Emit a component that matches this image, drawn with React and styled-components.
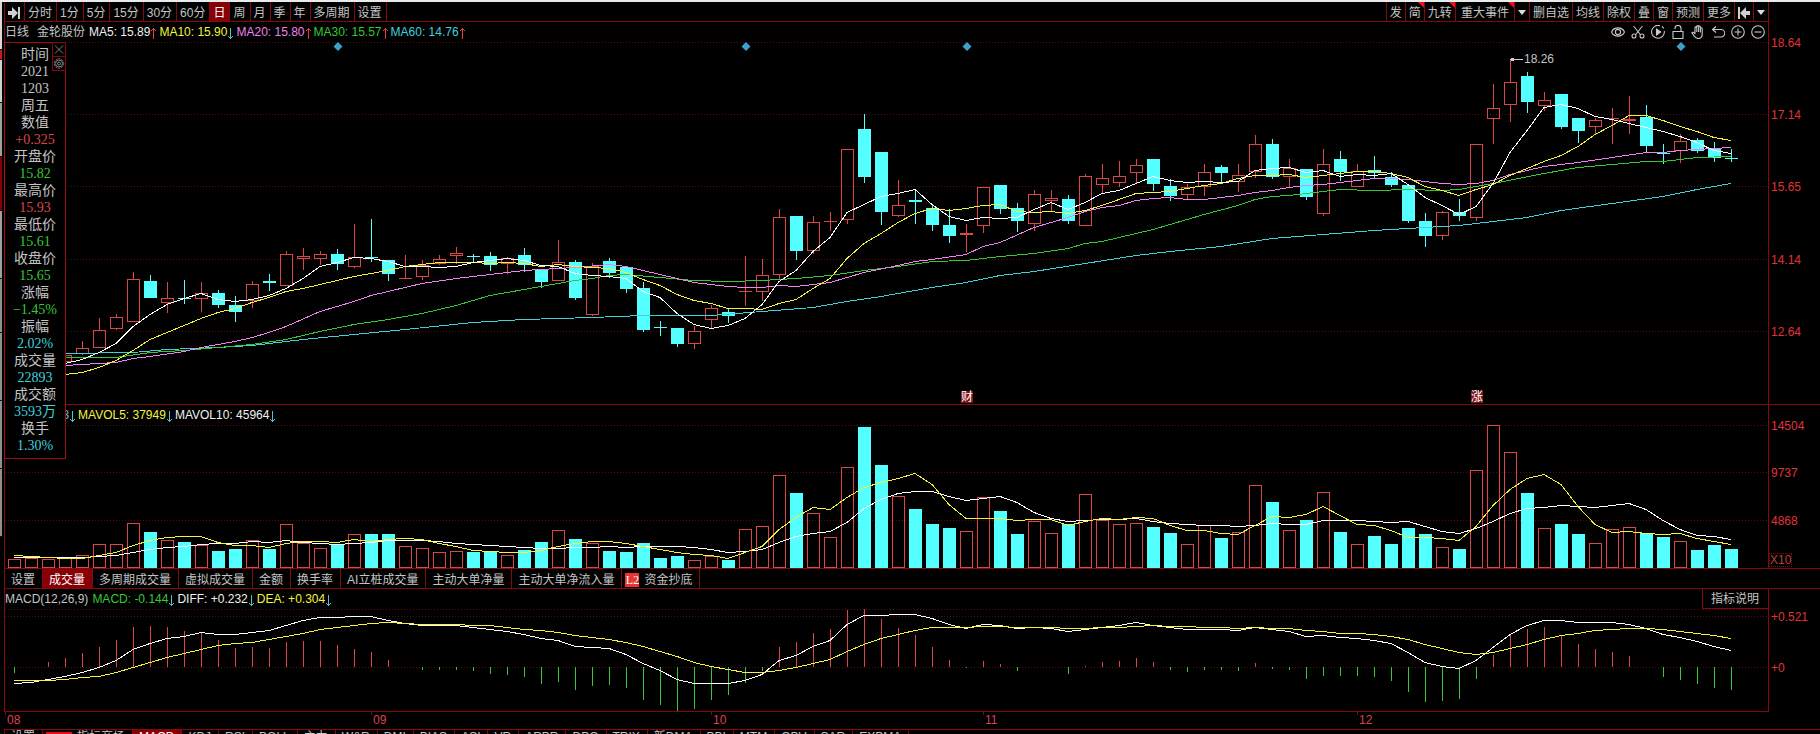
import React, { useLayoutEffect, useRef, useState } from "react";
import styled, { createGlobalStyle } from "styled-components";

const line = "#86080f";
const red = "#dc4646";
const cyan = "#54ffff";
const aqua = "#3fd0dc";
const green = "#34c834";
const yellow = "#f4f43c";
const pink = "#ee82ee";
const grey = "#c4c4c4";
const sans = '"Liberation Sans", "Noto Sans CJK SC", sans-serif';

/* ---------- data ---------- */

const BASE_WIDTH = 1763;
const BASE_PITCH = 17;

// [rising, high, body top, body bottom, low, volume top, macd tip]
const DAYS = [
  [1, 360, 365, 369, 372, 559, 673], [1, 358, 362, 366, 370, 558, 667],
  [1, 360, 365, 367, 370, 559, 662], [1, 352, 355, 361, 364, 558, 658],
  [1, 341, 348, 353, 355, 555, 653], [1, 318, 330, 347, 347, 544, 647],
  [1, 314, 317, 328, 330, 544, 640], [1, 272, 279, 321, 321, 523, 627],
  [0, 275, 281, 298, 298, 532, 626], [1, 282, 298, 302, 313, 540, 627],
  [0, 280, 298, 299, 304, 542, 631], [1, 282, 293, 298, 312, 545, 633],
  [0, 290, 293, 305, 308, 551, 640], [0, 296, 305, 312, 322, 549, 648],
  [1, 281, 284, 300, 308, 540, 647], [0, 274, 281, 283, 291, 549, 648],
  [1, 251, 254, 285, 286, 524, 642], [1, 248, 256, 258, 270, 543, 641],
  [1, 251, 254, 258, 265, 548, 641], [0, 249, 254, 264, 270, 544, 645],
  [1, 224, 257, 266, 268, 534, 649], [0, 219, 257, 258, 262, 534, 652],
  [0, 260, 260, 274, 281, 534, 660], [1, 255, 278, 278, 279, 546, 667],
  [1, 260, 265, 276, 280, 548, 670], [1, 255, 259, 263, 265, 552, 670],
  [1, 247, 253, 255, 264, 551, 670], [0, 254, 256, 257, 262, 552, 671],
  [0, 252, 256, 265, 271, 551, 674], [1, 257, 258, 263, 274, 555, 675],
  [0, 248, 255, 265, 272, 550, 677], [0, 269, 269, 282, 288, 542, 684],
  [1, 240, 262, 280, 281, 530, 682], [0, 260, 262, 298, 300, 539, 690],
  [1, 263, 266, 314, 316, 543, 686], [0, 258, 261, 273, 278, 551, 685],
  [0, 267, 267, 289, 293, 552, 688], [0, 282, 288, 330, 332, 543, 700],
  [0, 321, 327, 328, 336, 558, 705], [0, 328, 328, 344, 347, 556, 711],
  [1, 326, 331, 343, 349, 560, 709], [1, 305, 308, 319, 328, 556, 700],
  [0, 308, 312, 316, 323, 560, 695], [1, 256, 291, 291, 306, 529, 683],
  [1, 259, 275, 291, 301, 526, 671], [1, 209, 217, 274, 280, 475, 647],
  [0, 216, 216, 251, 260, 493, 642], [1, 216, 222, 250, 254, 513, 633],
  [1, 212, 221, 221, 231, 537, 629], [1, 149, 149, 219, 224, 467, 610],
  [0, 114, 129, 177, 183, 427, 609], [0, 152, 152, 212, 225, 465, 619],
  [1, 180, 205, 215, 217, 496, 628], [0, 190, 200, 202, 224, 509, 635],
  [0, 204, 208, 225, 231, 524, 647], [0, 209, 225, 236, 243, 528, 660],
  [1, 224, 233, 234, 252, 531, 668], [1, 187, 187, 225, 233, 497, 661],
  [0, 185, 185, 209, 214, 511, 664], [0, 203, 208, 221, 232, 534, 671],
  [1, 190, 194, 223, 231, 521, 667], [1, 190, 198, 200, 211, 533, 667],
  [0, 195, 199, 221, 224, 524, 674], [1, 174, 176, 225, 226, 494, 666],
  [1, 164, 178, 184, 193, 520, 662], [1, 161, 176, 182, 187, 524, 661],
  [1, 159, 165, 172, 183, 523, 658], [0, 159, 159, 184, 191, 527, 662],
  [0, 179, 186, 196, 201, 533, 670], [1, 184, 187, 194, 199, 544, 672],
  [1, 164, 172, 186, 196, 525, 670], [0, 165, 167, 173, 183, 538, 670],
  [1, 164, 175, 181, 192, 532, 671], [1, 135, 144, 171, 178, 485, 663],
  [0, 139, 144, 177, 179, 502, 669], [1, 159, 168, 176, 187, 530, 670],
  [0, 169, 169, 197, 200, 520, 679], [1, 149, 164, 213, 216, 492, 676],
  [0, 151, 159, 172, 181, 532, 676], [1, 164, 171, 186, 187, 544, 676],
  [0, 156, 170, 173, 178, 536, 677], [0, 172, 177, 185, 187, 544, 681],
  [0, 185, 185, 221, 223, 528, 692], [0, 213, 221, 236, 247, 534, 702],
  [1, 211, 212, 235, 240, 547, 701], [0, 199, 212, 216, 221, 549, 699],
  [1, 144, 144, 217, 221, 470, 679], [1, 84, 108, 118, 144, 425, 655],
  [1, 60, 82, 104, 122, 452, 635], [0, 72, 76, 102, 113, 493, 629],
  [1, 92, 100, 105, 111, 528, 627], [0, 94, 94, 127, 129, 524, 636],
  [0, 118, 118, 131, 143, 534, 644], [1, 118, 120, 126, 135, 543, 649],
  [1, 108, 118, 118, 144, 529, 652], [1, 96, 119, 120, 134, 527, 656],
  [0, 105, 117, 146, 152, 533, 667], [0, 144, 153, 154, 164, 537, 677],
  [1, 134, 141, 150, 163, 541, 680], [0, 138, 140, 151, 153, 550, 684],
  [0, 142, 148, 158, 162, 545, 688], [0, 149, 158, 159, 162, 549, 690],
].map(([up, high, top, bottom, low, volume, macd]) => ({ up, high, top, bottom, low, volume, macd }));

const average = (earlier, values, span) => {
  const all = [...earlier, ...values];
  return values.map((_, i) => {
    const end = i + earlier.length + 1;
    const part = all.slice(Math.max(0, end - span), end);
    return [i, part.reduce((a, b) => a + b, 0) / part.length];
  });
};

const closes = DAYS.map((d) => (d.up ? d.top : d.bottom));
const volumes = DAYS.map((d) => d.volume);
const MA5 = average([379, 408, 371, 370], closes, 5);
const MA10 = average([390, 385, 378, 368, 380, 387, 379, 408, 371], closes, 10);
const VOL5 = average([553, 553, 553, 556], volumes, 5);
const VOL10 = average([556, 556, 556, 556, 556, 556, 556, 557, 558], volumes, 10);

const MA20 = [[3, 365], [5, 363], [6, 362], [7, 358], [8, 356], [10, 351], [11, 347], [13, 341], [14, 337], [15, 332], [16, 326], [18, 311], [19, 306], [20, 301], [21, 295], [22, 291], [24, 283], [26, 278], [28, 274], [30, 270], [33, 267], [35, 264], [36, 266], [38, 274], [40, 282], [42, 286], [43, 287], [44, 287], [45, 285], [46, 286], [47, 284], [48, 282], [50, 272], [52, 265], [53, 261], [54, 259], [56, 254], [57, 246], [58, 242], [60, 227], [61, 222], [62, 217], [63, 211], [64, 207], [65, 205], [66, 200], [67, 198], [68, 197], [69, 199], [70, 199], [71, 197], [72, 195], [73, 192], [74, 190], [75, 187], [76, 185], [77, 184], [78, 182], [79, 180], [80, 178], [81, 178], [82, 179], [83, 181], [84, 183], [85, 184], [86, 183], [87, 180], [88, 174], [90, 166], [92, 162], [94, 157], [96, 152], [97, 152], [98, 150], [99, 149], [100, 148], [101, 147]];
const MA30 = [[3, 357], [6, 357], [8, 352], [10, 350], [12, 347], [14, 344], [16, 339], [18, 331], [20, 324], [22, 319], [24, 313], [26, 305], [28, 295], [29, 292], [31, 286], [33, 280], [34, 278], [35, 275], [36, 274], [38, 277], [40, 280], [42, 281], [44, 280], [46, 278], [48, 275], [50, 270], [52, 266], [54, 261], [56, 260], [58, 256], [60, 253], [62, 248], [63, 243], [64, 241], [66, 233], [67, 229], [68, 224], [70, 214], [72, 205], [73, 199], [74, 196], [75, 195], [77, 191], [78, 189], [80, 190], [82, 189], [84, 190], [85, 189], [87, 183], [90, 173], [92, 167], [96, 161], [97, 161], [99, 157], [101, 156]];
const MA60 = [[3, 353], [7, 352], [9, 349], [12, 347], [14, 345], [17, 339], [20, 334], [23, 329], [27, 322], [30, 319], [34, 317], [37, 315], [41, 315], [44, 311], [47, 307], [49, 301], [51, 296], [53, 290], [54, 287], [56, 282], [58, 275], [60, 271], [63, 263], [66, 255], [68, 251], [71, 246], [74, 238], [77, 234], [80, 230], [82, 228], [85, 225], [87, 221], [89, 217], [91, 210], [94, 203], [97, 196], [99, 189], [101, 183]];
const indexed = (values) => values.map((v, i) => [i, v]);
const DIFF = indexed([683, 682, 679, 676, 672, 667, 660, 649, 643, 638, 636, 632, 634, 634, 632, 630, 625, 620, 617, 617, 616, 616, 620, 623, 625, 625, 625, 627, 629, 631, 634, 638, 640, 646, 647, 648, 654, 663, 670, 679, 683, 683, 683, 680, 674, 660, 655, 646, 640, 624, 615, 615, 614, 614, 618, 624, 628, 624, 625, 628, 627, 628, 631, 629, 627, 625, 622, 625, 627, 629, 629, 629, 630, 627, 629, 631, 636, 635, 637, 638, 640, 643, 652, 662, 666, 668, 660, 647, 634, 625, 620, 620, 622, 622, 622, 624, 628, 634, 637, 641, 646, 650]);
const DEA = indexed([680, 680, 680, 679, 677, 676, 672, 667, 662, 657, 653, 649, 645, 643, 642, 639, 636, 633, 629, 627, 625, 623, 622, 623, 624, 624, 624, 625, 625, 627, 629, 630, 632, 635, 637, 639, 642, 646, 651, 656, 662, 666, 669, 672, 672, 670, 667, 663, 659, 651, 644, 638, 634, 630, 627, 627, 627, 626, 626, 627, 627, 627, 628, 628, 627, 627, 626, 625, 626, 626, 627, 627, 628, 627, 628, 628, 630, 631, 633, 633, 634, 636, 639, 644, 648, 652, 654, 652, 648, 644, 639, 635, 633, 630, 629, 628, 628, 629, 631, 633, 635, 638]);

const PERIODS = ["分时", "1分", "5分", "15分", "30分", "60分", "日", "周", "月", "季", "年", "多周期", "设置"];
const TOOLS = [
  { text: "发" }, { text: "简", hot: true }, { text: "九转", hot: true },
  { text: "重大事件", hot: true, wide: true }, { drop: true, name: "事件菜单" }, { text: "删自选" },
  { text: "均线" }, { text: "除权" }, { text: "叠" }, { text: "窗" }, { text: "预测" }, { text: "更多" },
];
const INDICATORS = ["设置", "成交量", "多周期成交量", "虚拟成交量", "金额", "换手率", "AI立桩成交量", "主动大单净量", "主动大单净流入量"];
const STUDIES = ["KDJ", "RSI", "BOLL", "主力", "W&R", "DMI", "BIAS", "ASI", "VR", "ARBR", "DPO", "TRIX", "新DMA", "BBI", "MTM", "OBV", "SAR", "EXPMA"];
const QUOTE = [
  ["时间"], ["2021", grey], ["1203", grey], ["周五"], ["数值"], ["+0.325", red],
  ["开盘价"], ["15.82", green], ["最高价"], ["15.93", red], ["最低价"], ["15.61", green],
  ["收盘价"], ["15.65", green], ["涨幅"], ["−1.45%", green], ["振幅"], ["2.02%", aqua],
  ["成交量"], ["22893", aqua], ["成交额"], ["3593万", aqua], ["换手"], ["1.30%", aqua],
];
const RAIL = [
  ["#d8d8d8", 48], ["#d01818", 10], ["#d0d0d0", 43], ["#a0a0a0", 54], ["#8a0000", 54],
  ["#a0a0a0", 68], ["#909090", 54], ["#909090", 68], ["#909090", 68], ["#909090", 68],
];

/* ---------- styles ---------- */

const GlobalStyle = createGlobalStyle`
  * { box-sizing: border-box; }
  body { margin: 0; background: #000; color: ${grey}; font: 12px/16px ${sans}; }
  button { margin: 0; padding: 0; border: 0; background: none; color: inherit; font: inherit; cursor: pointer; }
  svg { display: block; }
`;

const Screen = styled.div`
  height: 100vh;
  overflow: hidden;
  border-top: 2px solid #e8ebee;
  display: flex;
`;
const Rail = styled.div`
  width: 2px;
  margin-right: 2px;
  flex: none;
`;
const RailPart = styled.div`
  height: ${(p) => p.$size}px;
  background: ${(p) => p.$color};
  border-bottom: 1px solid #111;
`;
const Terminal = styled.main`
  flex: 1;
  min-width: 0;
  position: relative;
`;
const Toolbar = styled.nav`
  height: 20px;
  margin-right: 51px;
  border: solid ${line};
  border-width: 0 1px 1px;
  display: flex;
  justify-content: space-between;
`;
const Group = styled.div`
  display: flex;
`;
const ToolButton = styled.button`
  position: relative;
  height: 19px;
  flex: none;
  display: flex;
  align-items: center;
  justify-content: center;
  white-space: nowrap;
  padding: 2px ${(p) => (p.$wide ? 5 : 3)}px 0 !important;
  border: solid ${line} !important;
  border-width: ${(p) => (p.$side === "left" ? "0 0 0 1px" : "0 1px 0 0")} !important;
  background: ${(p) => (p.$active ? "#860006" : "none")};
  color: ${(p) => (p.$active ? "#fff" : grey)};
`;
const PeriodButton = styled(ToolButton)`
  padding: 2px 4px 0 3px !important;
`;
const Corner = styled.span`
  position: absolute;
  top: 0;
  right: 0;
  border: 3px solid;
  border-color: #f01020 #f01020 transparent transparent;
`;

const Pane = styled.section`
  display: flex;
  height: ${(p) => p.$size}px;
  border-bottom: ${(p) => (p.$open ? 0 : 1)}px solid ${line};
`;
const Plot = styled.div`
  position: relative;
  flex: 1;
  min-width: 0;
  overflow: hidden;
  border: solid ${line};
  border-width: 0 0 ${(p) => (p.$open ? 1 : 0)}px 1px;
`;
const Scale = styled.div`
  position: relative;
  flex: none;
  width: 52px;
  height: 100%;
  border-left: 1px solid ${line};
  color: #e23238;
`;
const ScaleMark = styled.span`
  position: absolute;
  left: ${(p) => (p.$boxed ? 0 : 2)}px;
  height: ${(p) => (p.$boxed ? 14 : 16)}px;
  line-height: ${(p) => (p.$boxed ? 13 : 16)}px;
  border: ${(p) => (p.$boxed ? `1px dotted ${line}` : 0)};
  color: ${(p) => (p.$boxed ? "#b84040" : "inherit")};
`;
const Legend = styled.div`
  position: absolute;
  top: 0;
  left: 0;
  right: 0;
  height: 20px;
  display: flex;
  align-items: center;
  gap: 2px;
  white-space: nowrap;
`;
const LegendName = styled.span`
  margin-right: ${(p) => (p.$loose ? 6 : 2)}px;
`;
const LegendItem = styled.span`
  display: flex;
  align-items: center;
  gap: 1px;
  color: ${(p) => p.$color};
`;
const IconRow = styled.div`
  display: flex;
  gap: 6px;
  margin: 0 3px 0 auto;
`;
const IconButton = styled.button`
  width: 14px;
  height: 14px;
`;
const HelpButton = styled.button`
  height: 20px;
  margin-left: auto !important;
  padding: 0 9px 0 8px !important;
  border: solid ${line} !important;
  border-width: 0 0 1px 1px !important;
`;

const Tabs = styled.nav`
  height: 20px;
  border: solid ${line};
  border-width: ${(p) => (p.$lower ? "1px 0 0 1px" : "0 0 1px 1px")};
  display: flex;
`;
const Tab = styled.button`
  height: ${(p) => (p.$low ? 14 : 19)}px;
  flex: none;
  display: flex;
  align-items: center;
  gap: 5px;
  white-space: nowrap;
  padding: ${(p) => (p.$low ? 0 : 2)}px 7px 0 6px !important;
  border-right: 1px solid ${line} !important;
  background: ${(p) => (p.$active ? "#860006" : "none")};
  color: ${(p) => (p.$active ? "#fff" : grey)};
`;
const BadgeTab = styled(Tab)`
  padding-left: 3px !important;
`;
const Badge = styled.span`
  width: 14px;
  height: 14px;
  background: #ea3434;
  color: #fff;
  font: 12px/14px "Liberation Serif", serif;
  text-align: center;
`;
const HotMark = styled.span`
  align-self: flex-start;
  width: 26px;
  height: 12px;
  margin-top: 2px;
  background: #e80c10;
`;
const Dates = styled.div`
  height: 17px;
  margin: 0 52px 0 1px;
  overflow: hidden;
`;

const Quote = styled.aside`
  position: absolute;
  top: 40px;
  left: 0;
  width: 62px;
  padding: 3px 0 4px;
  background: #000;
  border: 1px solid #a01016;
  font-size: 14px;
  line-height: 17px;
  text-align: center;
`;
const QuoteRow = styled.div`
  height: 17px;
  color: ${(p) => p.$color || grey};
  font-family: ${(p) => (p.$color ? '"Liberation Serif", "Noto Sans CJK SC", serif' : sans)};
`;
const QuoteTools = styled.div`
  position: absolute;
  top: -1px;
  right: -1px;
`;
const QuoteButton = styled.button`
  display: block;
  width: 14px;
  height: 15px;
  margin-bottom: -1px !important;
  border: 1px solid ${line} !important;
  color: #808080;
`;

/* ---------- drawings ---------- */

const Trend = ({ up }) => (
  <svg width="6" height="13" viewBox="0 0 6 13" fill="none" stroke={up ? "#e04040" : "#4cc4d8"} shapeRendering="crispEdges">
    {up ? <path d="M2.5 13V2M0 4.5h1M1 3.5h3M4 4.5h1" /> : <path d="M2.5 2v11M0 10.5h1M1 11.5h3M4 10.5h1" />}
  </svg>
);

const Caret = () => (
  <svg width="8" height="5" viewBox="0 0 8 5"><path d="M0 0h8L4 5z" fill="#dcdcdc" /></svg>
);

const Jump = ({ back }) => (
  <svg width="12" height="12" viewBox="0 0 12 12" fill="#d0d0d0">
    <g transform={back ? "matrix(-1 0 0 1 12 0)" : undefined}>
      <path d="M0 4h4V0l6 6-6 6V8H0zM10 0h2v12h-2z" />
    </g>
  </svg>
);

const ICONS = [
  ["显示", <g key="i"><path d="M.5 7C3 1.500 11 1.500 13.500 7C11 12.500 3 12.500 .5 7z" /><circle cx="7" cy="7" r="2.600" /></g>],
  ["剪切", <g key="i"><path d="M2.500 1l6.800 8.500M11.500 1L4.700 9.500" /><circle cx="3" cy="11" r="2" /><circle cx="11" cy="11" r="2" /></g>],
  ["播放", <g key="i"><path d="M9 .8A6.400 6.400 0 1 0 13.300 6M11 1.500l1.800 1.800" /><path d="M5.500 4v6l4.200-3z" fill="#d0d0d0" /></g>],
  ["解锁", <path key="i" d="M2 6.500h10v7H2zM4 4V3.500a3 3 0 0 1 6 0V6.500" />],
  ["拖动", <path key="i" d="M4 9V2.800a.9.9 0 0 1 1.800 0V7V1.500a.9.9 0 0 1 1.800 0V7V2a.9.9 0 0 1 1.800 0V7.500V3.600a.9.9 0 0 1 1.800 0V9c0 3-1.500 4.500-4 4.500S4 12.500 2.900 10.800L.9 7.700c.8-1 1.800-.4 3.100 1.300" />],
  ["撤销", <path key="i" d="M5 1.500L1.500 4.500L5 7.500M1.500 4.500H10a3.500 3.500 0 0 1 0 7.500H3" />],
  ["放大", <g key="i"><circle cx="7" cy="7" r="6.300" /><path d="M3.500 7h7M7 3.500v7" /></g>],
  ["缩小", <g key="i"><circle cx="7" cy="7" r="6.300" /><path d="M3.500 7h7" /></g>],
];

function useScaleX() {
  const ref = useRef(null);
  const [width, setWidth] = useState(BASE_WIDTH);
  useLayoutEffect(() => {
    const measure = () => setWidth(ref.current.clientWidth || BASE_WIDTH);
    measure();
    const observer = new ResizeObserver(measure);
    observer.observe(ref.current);
    return () => observer.disconnect();
  }, []);
  const pitch = (width / BASE_WIDTH) * BASE_PITCH;
  const body = Math.max(3, Math.round(pitch) - 4);
  return { ref, width, body, x: (i) => Math.round(9 + i * pitch) };
}

const Canvas = ({ width, top, size, children }) => (
  <svg width={width} height={size} viewBox={`0 ${top} ${width} ${size}`} shapeRendering="crispEdges">{children}</svg>
);

const Guides = ({ width, levels }) =>
  levels.map((y) => <path key={y} d={`M0 ${y}.5H${width - 1}`} stroke="#580a0e" strokeDasharray="1 2" />);

const Curve = ({ points, x, color }) => (
  <polyline points={points.map(([i, y]) => `${x(i)},${Math.round(y) + 0.5}`).join(" ")} fill="none" stroke={color} />
);

// A day that closes where it opened has no body: it is drawn as a single bar.
const Box = ({ left, top, width, bottom, up }) =>
  up && bottom > top ? (
    <rect x={left + 0.5} y={top + 0.5} width={width - 1} height={bottom - top} fill="none" stroke={red} />
  ) : (
    <rect x={left} y={top} width={width} height={Math.max(1, bottom - top)} fill={up ? red : cyan} />
  );

function PricePlot() {
  const { ref, width, body, x } = useScaleX();
  const half = (body - 1) / 2;
  return (
    <Plot ref={ref}>
      <Canvas width={width} top={22} size={382}>
        <Guides width={width} levels={[42, 114, 186, 259, 331]} />
        {DAYS.map((d, i) => (
          <g key={i}>
            <rect x={x(i)} y={d.high} width="1" height={Math.max(0, d.top - d.high)} fill={d.up ? red : cyan} />
            <rect x={x(i)} y={d.bottom} width="1" height={Math.max(0, d.low - d.bottom)} fill={d.up ? red : cyan} />
            <Box left={x(i) - half} width={body} top={d.top} bottom={d.bottom} up={d.up} />
          </g>
        ))}
        <Curve points={MA60} x={x} color={aqua} />
        <Curve points={MA30} x={x} color={green} />
        <Curve points={MA20} x={x} color={pink} />
        <Curve points={MA10} x={x} color={yellow} />
        <Curve points={MA5} x={x} color="#fff" />
        {[19, 43, 56, 98].map((i) => (
          <path key={i} d={`M${x(i) + 1} 42l4.500 4.500-4.500 4.500-4.500-4.500z`} fill="#3aa2c8" shapeRendering="auto" />
        ))}
        <path d={`M${x(88)} 59.500h13M${x(88) + 1} 58.500h3M${x(88) + 1} 60.500h3`} stroke="#d0d0d0" />
        <text x={x(88) + 14} y="63" fill={grey} fontSize="12">18.26</text>
        {[["财", 56], ["涨", 86]].map(([mark, i]) => (
          <g key={mark}>
            <rect x={x(i) - 5} y="391" width="12" height="12" fill="#7c1216" />
            <text x={x(i) - 5} y="401" fill="#fff" fontSize="12">{mark}</text>
          </g>
        ))}
      </Canvas>
      <Legend>
        <LegendName $loose>日线</LegendName>
        <LegendName>金轮股份</LegendName>
        <LegendItem $color="#f0f0f0">MA5: 15.89<Trend up /></LegendItem>
        <LegendItem $color={yellow}>MA10: 15.90<Trend /></LegendItem>
        <LegendItem $color={pink}>MA20: 15.80<Trend up /></LegendItem>
        <LegendItem $color={green}>MA30: 15.57<Trend up /></LegendItem>
        <LegendItem $color={aqua}>MA60: 14.76<Trend up /></LegendItem>
        <IconRow>
          {ICONS.map(([name, art]) => (
            <IconButton key={name} type="button" aria-label={name}>
              <svg width="14" height="14" viewBox="0 0 14 14" fill="none" stroke="#c8c8c8" strokeWidth="1.1">{art}</svg>
            </IconButton>
          ))}
        </IconRow>
      </Legend>
    </Plot>
  );
}

function VolumePlot() {
  const { ref, width, body, x } = useScaleX();
  const half = (body - 1) / 2;
  return (
    <Plot ref={ref}>
      <Canvas width={width} top={405} size={163}>
        <Guides width={width} levels={[425, 472, 520]} />
        {DAYS.map((d, i) => (
          <Box key={i} left={x(i) - half} width={body} top={d.volume} bottom={d.up ? 567 : 568} up={d.up} />
        ))}
        <Curve points={VOL10} x={x} color="#fff" />
        <Curve points={VOL5} x={x} color={yellow} />
      </Canvas>
      <Legend>
        <LegendItem $color="#7cb8c4">VOL: 22893<Trend /></LegendItem>
        <LegendItem $color={yellow}>MAVOL5: 37949<Trend /></LegendItem>
        <LegendItem $color="#f0f0f0">MAVOL10: 45964<Trend /></LegendItem>
      </Legend>
    </Plot>
  );
}

function MacdPlot() {
  const { ref, width, x } = useScaleX();
  return (
    <Plot ref={ref} $open>
      <Canvas width={width} top={589} size={122}>
        <Guides width={width} levels={[609, 616, 667]} />
        {DAYS.map((d, i) => (
          <rect
            key={i}
            x={x(i)}
            y={Math.min(667, d.macd)}
            width="1"
            height={Math.abs(d.macd - 667)}
            fill={d.macd < 667 ? red : green}
          />
        ))}
        <Curve points={DIFF} x={x} color="#fff" />
        <Curve points={DEA} x={x} color={yellow} />
      </Canvas>
      <Legend>
        <LegendName>MACD(12,26,9)</LegendName>
        <LegendItem $color={green}>MACD: -0.144<Trend /></LegendItem>
        <LegendItem $color="#f0f0f0">DIFF: +0.232<Trend /></LegendItem>
        <LegendItem $color={yellow}>DEA: +0.304<Trend /></LegendItem>
        <HelpButton type="button">指标说明</HelpButton>
      </Legend>
    </Plot>
  );
}

function DateAxis() {
  const { ref, width, x } = useScaleX();
  const months = [["08", 0], ["09", x(21)], ["10", x(41)], ["11", x(57)], ["12", x(79)]];
  return (
    <Dates ref={ref}>
      <Canvas width={width} top={0} size={17}>
        {months.map(([label, left]) => (
          <g key={label}>
            <rect x={left} y="0" width="1" height="3" fill={line} />
            <text x={left + 2} y="12" fill="#dc4050" fontSize="12">{label}</text>
          </g>
        ))}
      </Canvas>
    </Dates>
  );
}

const Axis = ({ marks }) => (
  <Scale>
    {marks.map(([text, top, boxed]) => (
      <ScaleMark key={text} $boxed={boxed} style={{ top }}>{text}</ScaleMark>
    ))}
  </Scale>
);

export default function App() {
  return (
    <>
      <GlobalStyle />
      <Screen>
        <Rail>
          {RAIL.map(([color, size], i) => <RailPart key={i} $color={color} $size={size} />)}
        </Rail>
        <Terminal>
          <Toolbar>
            <Group>
              <PeriodButton type="button" aria-label="前进"><Jump /></PeriodButton>
              {PERIODS.map((text) => (
                <PeriodButton key={text} type="button" $active={text === "日"}>{text}</PeriodButton>
              ))}
            </Group>
            <Group>
              {TOOLS.map(({ text, hot, wide, drop, name }) => (
                <ToolButton key={text || name} type="button" $side="left" $wide={wide} aria-label={name}>
                  {drop ? <Caret /> : text}
                  {hot && <Corner />}
                </ToolButton>
              ))}
              <ToolButton type="button" $side="left" aria-label="后退"><Jump back /></ToolButton>
              <ToolButton type="button" $side="left" aria-label="工具菜单"><Caret /></ToolButton>
            </Group>
          </Toolbar>

          <Pane $size={383}>
            <PricePlot />
            <Axis marks={[["18.64", 13], ["17.14", 85], ["15.65", 157], ["14.14", 230], ["12.64", 302]]} />
          </Pane>
          <Pane $size={164}>
            <VolumePlot />
            <Axis marks={[["14504", 13], ["9737", 60], ["4868", 108], ["X10", 148, true]]} />
          </Pane>
          <Tabs>
            {INDICATORS.map((text) => (
              <Tab key={text} type="button" $active={text === "成交量"}>{text}</Tab>
            ))}
            <BadgeTab type="button"><Badge>L2</Badge>资金抄底</BadgeTab>
          </Tabs>
          <Pane $size={123} $open>
            <MacdPlot />
            <Axis marks={[["+0.521", 20], ["+0", 71]]} />
          </Pane>
          <DateAxis />
          <Tabs $lower>
            <Tab type="button" $low>设置</Tab>
            <BadgeTab type="button" $low><HotMark />指标商场</BadgeTab>
            <Tab type="button" $low $active>MACD</Tab>
            {STUDIES.map((text) => <Tab key={text} type="button" $low>{text}</Tab>)}
          </Tabs>

          <Quote>
            {QUOTE.map(([text, color]) => <QuoteRow key={text} $color={color}>{text}</QuoteRow>)}
            <QuoteTools>
              <QuoteButton type="button" aria-label="关闭">
                <svg width="12" height="13" viewBox="0 0 12 13" stroke="currentColor"><path d="M2 2.500l8 8M10 2.500l-8 8" /></svg>
              </QuoteButton>
              <QuoteButton type="button" aria-label="面板设置">
                <svg width="12" height="13" viewBox="0 0 12 13" fill="none" stroke="currentColor">
                  <circle cx="6" cy="6.500" r="4.700" strokeDasharray="2 1" />
                  <circle cx="6" cy="6.500" r="3.500" />
                  <circle cx="6" cy="6.500" r="1.500" />
                </svg>
              </QuoteButton>
            </QuoteTools>
          </Quote>
        </Terminal>
      </Screen>
    </>
  );
}
